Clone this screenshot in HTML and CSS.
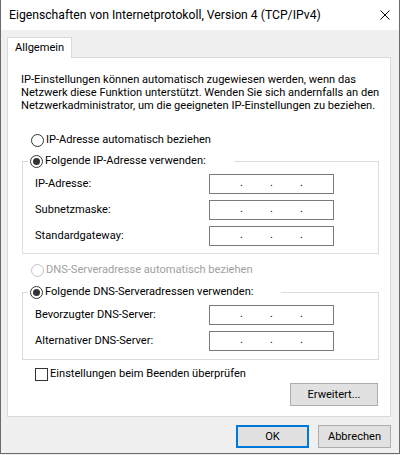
FILE: index.html
```html
<!DOCTYPE html>
<html lang="de">
<head>
<meta charset="utf-8">
<title>Eigenschaften von Internetprotokoll, Version 4 (TCP/IPv4)</title>
<link rel="stylesheet" href="styles.css">
</head>
<body>
<div class="window">
  <div class="titlebar">
    <span class="title">Eigenschaften von Internetprotokoll, Version 4 (TCP/IPv4)</span>
    <svg class="close" width="10" height="10" viewBox="0 0 10 10"><path d="M0.5 0.5L9.5 9.5M9.5 0.5L0.5 9.5" stroke="#000" stroke-width="1" fill="none"/></svg>
  </div>
  <div class="client">
    <div class="tabs"><div class="tab">Allgemein</div></div>
    <div class="panel">
      <p class="desc">IP-Einstellungen können automatisch zugewiesen werden, wenn das<br>Netzwerk diese Funktion unterstützt. Wenden Sie sich andernfalls an den<br>Netzwerkadministrator, um die geeigneten IP-Einstellungen zu beziehen.</p>

      <div class="radio-row first"><span class="radio"></span><span>IP-Adresse automatisch beziehen</span></div>

      <fieldset class="group">
        <legend class="legend"><span class="radio-row inline"><span class="radio checked"></span><span>Folgende IP-Adresse verwenden:</span></span></legend>
        <div class="fields">
          <span class="field-label">IP-Adresse:</span>
          <span class="ip"><span class="seg">.</span><span class="seg">.</span><span class="seg">.</span></span>
          <span class="field-label">Subnetzmaske:</span>
          <span class="ip"><span class="seg">.</span><span class="seg">.</span><span class="seg">.</span></span>
          <span class="field-label">Standardgateway:</span>
          <span class="ip"><span class="seg">.</span><span class="seg">.</span><span class="seg">.</span></span>
        </div>
      </fieldset>

      <div class="radio-row disabled"><span class="radio"></span><span>DNS-Serveradresse automatisch beziehen</span></div>

      <fieldset class="group dns">
        <legend class="legend"><span class="radio-row inline"><span class="radio checked"></span><span>Folgende DNS-Serveradressen verwenden:</span></span></legend>
        <div class="fields">
          <span class="field-label">Bevorzugter DNS-Server:</span>
          <span class="ip"><span class="seg">.</span><span class="seg">.</span><span class="seg">.</span></span>
          <span class="field-label">Alternativer DNS-Server:</span>
          <span class="ip"><span class="seg">.</span><span class="seg">.</span><span class="seg">.</span></span>
        </div>
      </fieldset>

      <div class="check-row"><span class="checkbox"></span><span>Einstellungen beim Beenden überprüfen</span></div>

      <div class="adv-row"><span class="button adv">Erweitert...</span></div>
    </div>
    <div class="footer">
      <span class="button default">OK</span>
      <span class="button">Abbrechen</span>
    </div>
  </div>
</div>
</body>
</html>
```

FILE: styles.css
```css
* { box-sizing: border-box; }
html, body { margin: 0; padding: 0; }
body {
  width: 400px;
  height: 455px;
  font-family: Roboto, "Segoe UI", sans-serif;
  font-size: 11.1px;
  color: #000;
  background: #f0f0f0;
}
.window {
  width: 400px;
  height: 454px;
  border: 1px solid #6b6b6b;
  border-top: none;
  display: flex;
  flex-direction: column;
  background: #f0f0f0;
}
.titlebar {
  height: 30px;
  flex: none;
  background: #fff;
  display: flex;
  align-items: center;
  justify-content: space-between;
  padding: 0 9px 0 8px;
}
.title { white-space: nowrap; line-height: 16px; font-size: 12.2px; }
.close { display: block; }
.client {
  flex: 1;
  padding: 7px 8px 0 6px;
  display: flex;
  flex-direction: column;
}
.tabs { display: flex; }
.tab {
  position: relative;
  z-index: 1;
  height: 21px;
  margin-bottom: -1px;
  padding: 2px 7px 0 7px;
  background: #fff;
  border: 1px solid #d9d9d9;
  border-bottom: none;
  line-height: 16px;
}
.panel {
  background: #fff;
  border: 1px solid #d9d9d9;
  padding: 15px 11px 10px 13px;
  display: flex;
  flex-direction: column;
}
.desc {
  margin: 0;
  line-height: 13px;
  white-space: nowrap;
}
.radio-row {
  display: flex;
  align-items: center;
  height: 16px;
  line-height: 16px;
  white-space: nowrap;
}
.radio-row.first { margin: 20px 0 0 10px; }
.radio-row.disabled { margin: 8px 0 0 10px; color: #a0a0a0; }
.radio-row.inline { display: inline-flex; }
.radio {
  width: 13px;
  height: 13px;
  flex: none;
  border: 1px solid #333;
  border-radius: 50%;
  background: #fff;
  margin-right: 2px;
  display: grid;
  place-items: center;
}
.radio.checked::after {
  content: "";
  width: 7px;
  height: 7px;
  border-radius: 50%;
  background: #333;
}
.disabled .radio { border-color: #c4c4c4; }
.group {
  margin: 5px 0 0 1px;
  padding: 0 0 7px 0;
  border: 1px solid #dcdcdc;
  min-width: 0;
}
.group.dns { margin-top: 6px; padding-bottom: 8px; }
.legend {
  margin-left: 5px;
  padding: 0 28px 0 2px;
  line-height: 16px;
  height: 16px;
}
.fields {
  display: grid;
  grid-template-columns: 174px 125px;
  grid-auto-rows: 20px;
  row-gap: 6px;
  align-items: center;
  padding: 5px 0 0 12px;
}
.field-label { white-space: nowrap; line-height: 16px; }
.ip {
  height: 20px;
  border: 1px solid #7a7a7a;
  background: #fff;
  display: flex;
  padding-left: 4px;
  line-height: 16px;
}
.seg {
  width: 30px;
  text-align: right;
  padding-right: 1px;
}
.check-row {
  display: flex;
  align-items: center;
  height: 16px;
  line-height: 16px;
  margin: 6px 0 0 14px;
  white-space: nowrap;
}
.checkbox {
  width: 13px;
  height: 13px;
  flex: none;
  border: 1px solid #333;
  background: #fff;
  margin-right: 2px;
}
.adv-row {
  display: flex;
  justify-content: flex-end;
  margin-top: 1px;
  padding-right: 1px;
}
.button {
  display: flex;
  align-items: center;
  justify-content: center;
  height: 23px;
  width: 73px;
  background: #e1e1e1;
  border: 1px solid #adadad;
  line-height: 16px;
  white-space: nowrap;
}
.button.adv { width: 88px; }
.button.default {
  border-color: #0078d7;
  box-shadow: inset 0 0 0 1px #0078d7;
}
.footer {
  display: flex;
  justify-content: flex-end;
  gap: 9px;
  margin-top: 8px;
}
```
